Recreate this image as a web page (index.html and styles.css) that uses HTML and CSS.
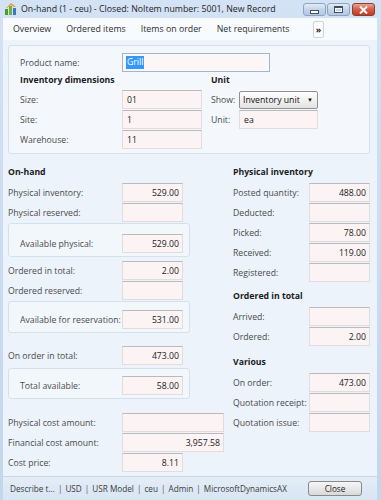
FILE: index.html
```html
<!DOCTYPE html>
<html lang="en">
<head>
    <meta charset="UTF-8">
    <meta name="viewport" content="width=device-width, initial-scale=1.0">
    <title>On-hand</title>
    <link rel="stylesheet" href="styles.css">
</head>
<body>
    <div class="window">
        <div class="titlebar">
            <svg class="app-icon" width="12" height="12" viewBox="0 0 12 12">
                <rect x="0" y="6" width="3" height="6" fill="#4f9a2e"/>
                <rect x="4" y="3" width="3" height="9" fill="#6cb33f"/>
                <rect x="8" y="5" width="3" height="7" fill="#3a78c2"/>
                <path d="M1 5 L6 0 L11 4 L9 4 L6 2 L2 5 Z" fill="#f29a1f"/>
            </svg>
            <span class="title">On-hand (1 - ceu) - Closed: NoItem number: 5001, New Record</span>
            <div class="win-buttons">
                <span class="wbtn wbtn-min"><span class="glyph-min"></span></span>
                <span class="wbtn wbtn-max"><span class="glyph-max"></span></span>
                <span class="wbtn wbtn-close">
                    <svg width="9" height="8" viewBox="0 0 9 8"><path d="M1 0.5 L8 7.5 M8 0.5 L1 7.5" stroke="#fff" stroke-width="2"/></svg>
                </span>
            </div>
        </div>
        <div class="client">
            <div class="tabs">
                <span class="tab">Overview</span>
                <span class="tab">Ordered items</span>
                <span class="tab">Items on order</span>
                <span class="tab">Net requirements</span>
                <span class="more">&raquo;</span>
            </div>
            <div class="content">
                <div class="group group-top">
                    <div class="row">
                        <span class="lbl lbl-top">Product name:</span>
                        <span class="inp inp-name"><span class="sel">Grill</span></span>
                    </div>
                    <div class="dims">
                        <div class="dims-left">
                            <div class="sub-heading">Inventory dimensions</div>
                            <div class="row"><span class="lbl lbl-top">Size:</span><span class="inp inp-dim">01</span></div>
                            <div class="row"><span class="lbl lbl-top">Site:</span><span class="inp inp-dim">1</span></div>
                            <div class="row"><span class="lbl lbl-top">Warehouse:</span><span class="inp inp-dim">11</span></div>
                        </div>
                        <div class="dims-right">
                            <div class="sub-heading">Unit</div>
                            <div class="row">
                                <span class="lbl lbl-unit">Show:</span>
                                <span class="select">Inventory unit<span class="arrow">&#9660;</span></span>
                            </div>
                            <div class="row"><span class="lbl lbl-unit">Unit:</span><span class="inp inp-unit">ea</span></div>
                        </div>
                    </div>
                </div>

                <div class="columns">
                    <div class="col col-left">
                        <div class="heading">On-hand</div>
                        <div class="row"><span class="lbl">Physical inventory:</span><span class="inp num">529.00</span></div>
                        <div class="row"><span class="lbl">Physical reserved:</span><span class="inp num"></span></div>
                        <div class="box box-first">
                            <div class="row"><span class="lbl lbl-box">Available physical:</span><span class="inp num">529.00</span></div>
                        </div>
                        <div class="row row-after-box"><span class="lbl">Ordered in total:</span><span class="inp num">2.00</span></div>
                        <div class="row"><span class="lbl">Ordered reserved:</span><span class="inp num"></span></div>
                        <div class="box">
                            <div class="row"><span class="lbl lbl-box">Available for reservation:</span><span class="inp num">531.00</span></div>
                        </div>
                        <div class="row row-order"><span class="lbl">On order in total:</span><span class="inp num">473.00</span></div>
                        <div class="box box-last">
                            <div class="row"><span class="lbl lbl-box">Total available:</span><span class="inp num">58.00</span></div>
                        </div>
                        <div class="row row-cost"><span class="lbl">Physical cost amount:</span><span class="inp num inp-wide"></span></div>
                        <div class="row"><span class="lbl">Financial cost amount:</span><span class="inp num inp-wide">3,957.58</span></div>
                        <div class="row"><span class="lbl">Cost price:</span><span class="inp num">8.11</span></div>
                    </div>
                    <div class="col col-right">
                        <div class="heading">Physical inventory</div>
                        <div class="row"><span class="lbl lbl-right">Posted quantity:</span><span class="inp num">488.00</span></div>
                        <div class="row"><span class="lbl lbl-right">Deducted:</span><span class="inp num"></span></div>
                        <div class="row"><span class="lbl lbl-right">Picked:</span><span class="inp num">78.00</span></div>
                        <div class="row"><span class="lbl lbl-right">Received:</span><span class="inp num">119.00</span></div>
                        <div class="row"><span class="lbl lbl-right">Registered:</span><span class="inp num"></span></div>
                        <div class="heading heading-gap">Ordered in total</div>
                        <div class="row"><span class="lbl lbl-right">Arrived:</span><span class="inp num"></span></div>
                        <div class="row"><span class="lbl lbl-right">Ordered:</span><span class="inp num">2.00</span></div>
                        <div class="heading heading-gap2">Various</div>
                        <div class="row"><span class="lbl lbl-right">On order:</span><span class="inp num">473.00</span></div>
                        <div class="row"><span class="lbl lbl-right">Quotation receipt:</span><span class="inp num"></span></div>
                        <div class="row"><span class="lbl lbl-right">Quotation issue:</span><span class="inp num"></span></div>
                    </div>
                </div>
            </div>
            <div class="statusbar">
                <span class="status-item">Describe t...</span>
                <span class="sep">|</span>
                <span class="status-item">USD</span>
                <span class="sep">|</span>
                <span class="status-item">USR Model</span>
                <span class="sep">|</span>
                <span class="status-item">ceu</span>
                <span class="sep">|</span>
                <span class="status-item">Admin</span>
                <span class="sep">|</span>
                <span class="status-item">MicrosoftDynamicsAX</span>
                <span class="close-btn">Close</span>
            </div>
        </div>
    </div>
</body>
</html>
```

FILE: styles.css
```css
body {
    margin: 0;
    font-family: 'Open Sans', 'Noto Sans', sans-serif;
    font-size: 8.7px;
    color: #4a4a4a;
    background-color: #c6d9ef;
}
.window {
    width: 381px;
    height: 500px;
    background: linear-gradient(#d3e2f4, #c2d6ee);
    display: flex;
    flex-direction: column;
    overflow: hidden;
}
.titlebar {
    height: 18px;
    display: flex;
    align-items: center;
    padding-left: 5px;
    box-sizing: border-box;
}
.app-icon {
    margin-right: 4px;
    flex-shrink: 0;
}
.title {
    font-size: 8.8px;
    color: #1e1e1e;
    white-space: nowrap;
}
.win-buttons {
    margin-left: auto;
    margin-right: 6px;
    display: flex;
    gap: 1px;
    align-self: flex-start;
    margin-top: 3px;
}
.wbtn {
    width: 23px;
    height: 13px;
    flex-shrink: 0;
    box-sizing: border-box;
    border: 1px solid #8ca3c1;
    border-radius: 3px;
    background: linear-gradient(#e3ecf6, #c3d4e8 50%, #b3c8e1);
    display: flex;
    align-items: center;
    justify-content: center;
}
.wbtn-close {
    margin-left: 1px;
    border-color: #8b3c33;
    background: linear-gradient(#eaa794, #d5604c 45%, #c53a26);
}
.glyph-min {
    width: 7px;
    height: 2px;
    background: #fff;
    border: 1px solid #3d4f66;
    margin-top: 4px;
}
.glyph-max {
    width: 7px;
    height: 4px;
    border: 1px solid #3d4f66;
    border-top-width: 2px;
    background: transparent;
    box-shadow: inset 0 0 0 1px #fff;
}
.client {
    flex: 1;
    margin: 0 4px 0 3px;
    background-color: #ecf3fb;
    display: flex;
    flex-direction: column;
}
.tabs {
    height: 22px;
    display: flex;
    align-items: center;
    gap: 15px;
    padding-left: 10px;
    background-color: #f8fbfe;
    color: #2f2f2f;
    font-size: 8.8px;
}
.more {
    margin-left: auto;
    margin-right: 53px;
    width: 11px;
    height: 17px;
    box-sizing: border-box;
    border: 1px solid #c9d4e0;
    border-radius: 2px;
    background-color: #fff;
    font-size: 9px;
    font-weight: 700;
    color: #222;
    display: flex;
    align-items: center;
    justify-content: center;
    line-height: 1;
}
.content {
    flex: 1;
    padding: 5px 7px 0 5px;
}
.group-top {
    border: 1px solid #d4e0ec;
    border-radius: 3px;
    background-color: #f4f8fd;
    padding: 7px 0 3px 11px;
}
.row {
    display: flex;
    align-items: center;
    height: 19px;
    margin-bottom: 1px;
}
.lbl {
    width: 114px;
    flex-shrink: 0;
    white-space: nowrap;
}
.lbl-top {
    width: 102px;
}
.lbl-box {
    width: 102px;
}
.lbl-unit {
    width: 28px;
}
.lbl-right {
    width: 76px;
}
.inp {
    width: 61px;
    height: 19px;
    flex-shrink: 0;
    box-sizing: border-box;
    background-color: #fbf3f4;
    border: 1px solid #e2dcdc;
    border-top-color: #bdb9b9;
    color: #1a1a1a;
    padding: 0 4px;
    display: flex;
    align-items: center;
    white-space: nowrap;
}
.num {
    justify-content: flex-end;
    padding-right: 3px;
}
.inp-name {
    width: 148px;
    border-color: #9fb6d0;
    background-color: #fdf6f6;
    padding-left: 3px;
}
.sel {
    background-color: #3399ff;
    color: #fff;
    padding: 0 1px;
    line-height: 13px;
}
.inp-dim {
    width: 80px;
}
.inp-unit {
    width: 79px;
}
.inp-wide {
    width: 102px;
}
.dims {
    display: flex;
}
.dims-left {
    width: 191px;
}
.sub-heading,
.heading {
    font-weight: 700;
    color: #1b1b1b;
    height: 14px;
    line-height: 14px;
    margin-bottom: 3px;
}
.heading {
    height: 16px;
    line-height: 16px;
}
.select {
    width: 79px;
    height: 18px;
    box-sizing: border-box;
    border: 1px solid #8f9090;
    border-radius: 2px;
    background: linear-gradient(#ffffff, #f1f1f1 50%, #e2e2e2);
    color: #111;
    display: flex;
    align-items: center;
    padding-left: 3px;
    white-space: nowrap;
}
.arrow {
    margin-left: auto;
    margin-right: 4px;
    font-size: 6px;
    color: #111;
}
.columns {
    display: flex;
    padding-top: 10px;
}
.col-left {
    width: 226px;
}
.box {
    width: 182px;
    box-sizing: border-box;
    border: 1px solid #d4e0ec;
    border-radius: 3px;
    background-color: #f2f7fc;
    padding: 8px 6px 2px 11px;
    margin-top: 1px;
}
.box-first {
    margin-top: 0;
    padding-top: 10px;
}
.box-last {
    margin-top: 3px;
    padding-top: 7px;
}
.row-after-box {
    margin-top: 4px;
}
.row-order {
    margin-top: 13px;
}
.row-cost {
    margin-top: 14px;
}
.heading-gap {
    margin-top: 6px;
}
.heading-gap2 {
    margin-top: 8px;
}
.statusbar {
    height: 24px;
    box-sizing: border-box;
    border-top: 1px solid #c9d8e8;
    background: linear-gradient(#e4edf7, #d8e5f3);
    display: flex;
    align-items: center;
    padding-left: 7px;
    color: #3a3a3a;
    font-size: 8.2px;
    white-space: nowrap;
}
.sep {
    margin: 0 3px;
    color: #555;
}
.close-btn {
    margin-left: auto;
    margin-right: 15px;
    width: 54px;
    height: 15px;
    flex-shrink: 0;
    box-sizing: border-box;
    border: 1px solid #8a8a8a;
    border-radius: 3px;
    background: linear-gradient(#f6f6f6, #e8e8e8 50%, #d9d9d9);
    color: #1e1e1e;
    display: flex;
    align-items: center;
    justify-content: center;
}
```
